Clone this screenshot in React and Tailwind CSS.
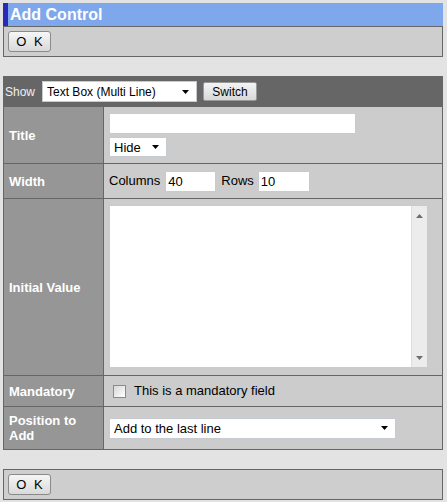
function Arrow({ up = false, color = '#000' }) {
  return (
    <svg width="7" height="4" viewBox="0 0 7 4" className="shrink-0">
      {up ? <path d="M3.5 0L7 4H0Z" fill={color} /> : <path d="M0 0H7L3.5 4Z" fill={color} />}
    </svg>
  )
}

function Select({ value, className = '', textClass = 'text-[13px]' }) {
  return (
    <div className={`flex items-center justify-between border border-[#c6cad1] bg-white pl-[4px] pr-[7px] ${className}`}>
      <span className={`${textClass} leading-none`}>{value}</span>
      <Arrow />
    </div>
  )
}

function Input({ value = '', className = '' }) {
  return (
    <div className={`flex items-center border border-[#c6cad1] bg-white pl-[2px] text-[13px] leading-none ${className}`}>
      {value}
    </div>
  )
}

function OkButton() {
  return (
    <button className="flex h-[21px] w-[43px] items-center justify-center rounded-[3px] border border-[#8a8a8a] bg-gradient-to-b from-[#f6f6f6] to-[#d9d9d9] pl-[2px] text-[13px] tracking-[2px] leading-none">
      O K
    </button>
  )
}

function Toolbar() {
  return (
    <div className="flex h-[31px] items-center border border-[#666] bg-[#cecece] pl-[4px]">
      <OkButton />
    </div>
  )
}

function Row({ label, height, children, className = '' }) {
  return (
    <div className={`flex border-t border-[#666] ${height}`}>
      <div className="flex w-[100px] shrink-0 items-center border-r border-[#666] bg-[#969696] pl-[5px] pr-[4px] text-[13px] font-bold leading-[15px] text-white">
        {label}
      </div>
      <div className={`flex flex-1 bg-[#cccccc] ${className}`}>{children}</div>
    </div>
  )
}

export default function App() {
  return (
    <div className="min-h-[502px] bg-[#e3e3e3] pl-[3px] pr-[4px] pt-[3px] font-['Liberation_Sans',Arial,sans-serif] text-black">
      <div className="flex h-[23px] bg-[#7ea8eb]">
        <div className="w-[5px] bg-[#2a2ab6]" />
        <div className="pl-[2px] text-[16px] font-bold leading-[23px] text-white">Add Control</div>
      </div>
      <Toolbar />

      <div className="mt-[19px] border border-[#666]">
        <div className="flex h-[29px] items-center bg-[#666666] pl-[1px]">
          <span className="text-[12px] text-[#f0f0f0]">Show</span>
          <Select value="Text Box (Multi Line)" textClass="text-[12px]" className="ml-[7px] h-[21px] w-[155px]" />
          <button className="ml-[6px] flex h-[19px] w-[54px] items-center justify-center rounded-[2px] border border-[#999] bg-gradient-to-b from-[#f4f4f4] to-[#d8d8d8] text-[12px] leading-none">
            Switch
          </button>
        </div>

        <Row label="Title" height="h-[57px]" className="flex-col gap-[3px] pl-[5px] pt-[6px]">
          <Input className="h-[21px] w-[247px]" />
          <Select value="Hide" className="h-[20px] w-[58px]" />
        </Row>

        <Row label="Width" height="h-[35px]" className="items-center pl-[5px] text-[13px]">
          <span>Columns</span>
          <Input value="40" className="ml-[5px] h-[21px] w-[51px]" />
          <span className="ml-[5px]">Rows</span>
          <Input value="10" className="ml-[4px] h-[21px] w-[52px]" />
        </Row>

        <Row label="Initial Value" height="h-[177px]" className="pl-[5px] pt-[6px]">
          <div className="flex h-[163px] w-[319px] border border-[#c6cad1] bg-white">
            <div className="flex-1" />
            <div className="flex w-[16px] flex-col items-center justify-between border-l border-[#dedede] bg-[#ececec] pb-[7px] pt-[8px]">
              <Arrow up color="#6e6e6e" />
              <Arrow color="#6e6e6e" />
            </div>
          </div>
        </Row>

        <Row label="Mandatory" height="h-[31px]" className="items-center pl-[9px]">
          <div className="h-[13px] w-[13px] border border-[#8a8a8a] bg-gradient-to-br from-[#d8d8d8] to-[#ffffff]" />
          <span className="ml-[8px] text-[13px]">This is a mandatory field</span>
        </Row>

        <Row label="Position to Add" height="h-[43px]" className="items-center pl-[5px]">
          <Select value="Add to the last line" className="h-[21px] w-[287px]" />
        </Row>
      </div>

      <div className="mt-[19px]">
        <Toolbar />
      </div>
    </div>
  )
}
